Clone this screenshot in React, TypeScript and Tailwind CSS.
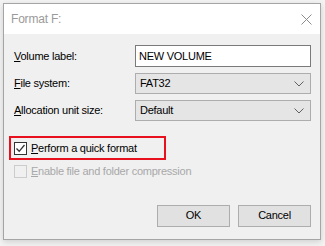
const FONT = "font-['Segoe_UI','Liberation_Sans',Arial,sans-serif]";
const TXT = "text-[11px] tracking-[-0.25px]";

function Chevron() {
  return (
    <svg width="10" height="6" viewBox="0 0 10 6" className="text-[#606060]">
      <path d="M0.5 0.5 L5 5 L9.5 0.5" fill="none" stroke="currentColor" strokeWidth="1" />
    </svg>
  );
}

function Check() {
  return (
    <svg width="11" height="11" viewBox="0 0 11 11">
      <path d="M1.5 5.5 L4.2 8.3 L9.5 2" fill="none" stroke="#333" strokeWidth="1.3" />
    </svg>
  );
}

function Field({ label, accel, children }: { label: string; accel: string; children: React.ReactNode }) {
  return (
    <div className="flex items-center">
      <div className={`w-[121px] text-black ${TXT}`}>
        <span className="underline underline-offset-[1px]">{accel}</span>
        {label}
      </div>
      {children}
    </div>
  );
}

function Select({ value }: { value: string }) {
  return (
    <div className={`flex h-[21px] w-[176px] items-center justify-between border border-[#adadad] bg-[#e5e5e5] pl-[4px] pr-[6px] text-black ${TXT}`}>
      <span>{value}</span>
      <Chevron />
    </div>
  );
}

export default function App() {
  return (
    <div className={`h-[246px] w-[325px] overflow-hidden bg-[#f3f3f3] pl-[3px] pt-[3px] ${FONT}`}>
      <div className="flex h-[237px] w-[318px] flex-col border border-[#a5a5a5] bg-[#f0f0f0] shadow-[0_2px_6px_rgba(0,0,0,0.15)]">
        <div className="flex h-[30px] items-center justify-between bg-white pl-[7px] pr-[8px]">
          <span className="text-[12px] tracking-[-0.2px] text-[#9a9a9a]">Format F:</span>
          <svg width="11" height="11" viewBox="0 0 11 11">
            <path d="M0.5 0.5 L10.5 10.5 M10.5 0.5 L0.5 10.5" stroke="#8c8c8c" strokeWidth="1" />
          </svg>
        </div>

        <div className="flex flex-col pl-[10px] pt-[11px]">
          <div className="flex flex-col gap-[6px]">
            <Field accel="V" label="olume label:">
              <div className={`flex h-[22px] w-[176px] items-center border border-[#7a7a7a] bg-white pl-[3px] text-black ${TXT}`}>
                NEW VOLUME
              </div>
            </Field>
            <Field accel="F" label="ile system:">
              <Select value="FAT32" />
            </Field>
            <Field accel="A" label="llocation unit size:">
              <Select value="Default" />
            </Field>
          </div>

          <div className={`ml-[-5px] mt-[15px] flex h-[24px] w-[157px] items-center gap-[4px] border-2 border-[#e8101c] pl-[3px] text-black ${TXT}`}>
            <div className="flex h-[13px] w-[13px] items-center justify-center border border-[#333] bg-white">
              <Check />
            </div>
            <span>
              <span className="underline underline-offset-[1px]">P</span>erform a quick format
            </span>
          </div>

          <div className={`mt-[3px] flex items-center gap-[4px] text-[#a8a8a8] ${TXT}`}>
            <div className="h-[13px] w-[13px] border border-[#cccccc] bg-[#f0f0f0]" />
            <span>
              <span className="underline underline-offset-[1px]">E</span>nable file and folder compression
            </span>
          </div>

          <div className="mt-[25px] flex justify-end gap-[8px] pr-[9px]">
            <button className={`h-[22px] w-[73px] border border-[#adadad] bg-[#e1e1e1] text-black ${TXT}`}>
              OK
            </button>
            <button className={`h-[22px] w-[73px] border border-[#adadad] bg-[#e1e1e1] text-black ${TXT}`}>
              Cancel
            </button>
          </div>
        </div>
      </div>
    </div>
  );
}
